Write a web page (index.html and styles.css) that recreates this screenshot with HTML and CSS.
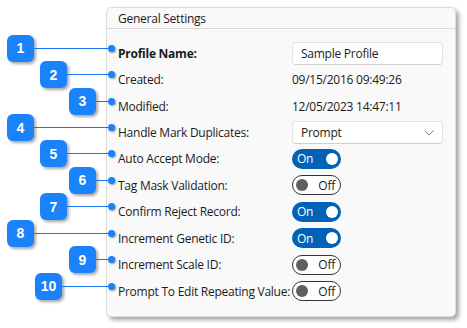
FILE: index.html
```html
<!DOCTYPE html>
<html lang="en">
<head>
    <meta charset="UTF-8">
    <title>General Settings</title>
    <link rel="stylesheet" href="styles.css">
</head>
<body>
    <div class="page">
        <div class="panel">
            <div class="panel-title">General Settings</div>
            <div class="settings">
                <div class="row">
                    <div class="label bold">Profile Name:
                        <span class="callout far"><span class="badge">1</span><span class="line"></span><span class="dot"></span></span>
                    </div>
                    <div class="value"><div class="textbox">Sample Profile</div></div>
                </div>
                <div class="row">
                    <div class="label">Created:
                        <span class="callout mid"><span class="badge">2</span><span class="line"></span><span class="dot"></span></span>
                    </div>
                    <div class="value"><span class="plain">09/15/2016 09:49:26</span></div>
                </div>
                <div class="row">
                    <div class="label">Modified:
                        <span class="callout near"><span class="badge">3</span><span class="line"></span><span class="dot"></span></span>
                    </div>
                    <div class="value"><span class="plain">12/05/2023 14:47:11</span></div>
                </div>
                <div class="row">
                    <div class="label">Handle Mark Duplicates:
                        <span class="callout far"><span class="badge">4</span><span class="line"></span><span class="dot"></span></span>
                    </div>
                    <div class="value">
                        <div class="textbox select">Prompt
                            <svg class="chevron" width="10" height="6" viewBox="0 0 10 6"><path d="M0.5 0.5 L5 5 L9.5 0.5" fill="none" stroke="#7a7a7a" stroke-width="1"/></svg>
                        </div>
                    </div>
                </div>
                <div class="row">
                    <div class="label">Auto Accept Mode:
                        <span class="callout mid"><span class="badge">5</span><span class="line"></span><span class="dot"></span></span>
                    </div>
                    <div class="value"><span class="toggle on"><span class="toggle-text">On</span><span class="knob"></span></span></div>
                </div>
                <div class="row">
                    <div class="label">Tag Mask Validation:
                        <span class="callout near"><span class="badge">6</span><span class="line"></span><span class="dot"></span></span>
                    </div>
                    <div class="value"><span class="toggle off"><span class="knob"></span><span class="toggle-text">Off</span></span></div>
                </div>
                <div class="row">
                    <div class="label">Confirm Reject Record:
                        <span class="callout mid"><span class="badge">7</span><span class="line"></span><span class="dot"></span></span>
                    </div>
                    <div class="value"><span class="toggle on"><span class="toggle-text">On</span><span class="knob"></span></span></div>
                </div>
                <div class="row">
                    <div class="label">Increment Genetic ID:
                        <span class="callout far"><span class="badge">8</span><span class="line"></span><span class="dot"></span></span>
                    </div>
                    <div class="value"><span class="toggle on"><span class="toggle-text">On</span><span class="knob"></span></span></div>
                </div>
                <div class="row">
                    <div class="label">Increment Scale ID:
                        <span class="callout near"><span class="badge">9</span><span class="line"></span><span class="dot"></span></span>
                    </div>
                    <div class="value"><span class="toggle off"><span class="knob"></span><span class="toggle-text">Off</span></span></div>
                </div>
                <div class="row">
                    <div class="label">Prompt To Edit Repeating Value:
                        <span class="callout wide"><span class="badge">10</span><span class="line"></span><span class="dot"></span></span>
                    </div>
                    <div class="value"><span class="toggle off"><span class="knob"></span><span class="toggle-text">Off</span></span></div>
                </div>
            </div>
        </div>
    </div>
</body>
</html>
```
FILE: styles.css
```css
* {
    margin: 0;
    padding: 0;
    box-sizing: border-box;
}

body {
    width: 467px;
    height: 328px;
    background: #ffffff;
    font-family: 'Open Sans', 'Noto Sans', 'Liberation Sans', sans-serif;
    font-size: 12px;
    letter-spacing: -0.25px;
    color: #1b1b1b;
    overflow: hidden;
}

.page {
    padding: 7px 0 0 106px;
}

/* settings panel */
.panel {
    width: 350px;
    height: 310px;
    background: #f9f9f9;
    border: 1px solid #dcdcdc;
    border-radius: 5px;
    box-shadow: 3px 3px 4px rgba(0, 0, 0, 0.35);
}

.panel-title {
    height: 21px;
    line-height: 21px;
    padding-left: 11px;
    border-bottom: 1px solid #d9d9d9;
}

.settings {
    padding: 11px 0 0 11px;
}

.row {
    display: grid;
    grid-template-columns: 174px 151px;
    height: 26.45px;
    align-items: center;
}

.label {
    position: relative;
    white-space: nowrap;
}

.bold {
    font-weight: 700;
}

.value {
    display: flex;
    align-items: center;
}

.textbox {
    width: 151px;
    height: 23px;
    background: #ffffff;
    border: 1px solid #e3e3e3;
    border-bottom-color: #cfcfcf;
    border-radius: 4px;
    padding-left: 8px;
    line-height: 21px;
}

.select {
    display: flex;
    align-items: center;
    justify-content: space-between;
    padding-right: 8px;
}

/* toggle switches */
.toggle {
    width: 49px;
    height: 20px;
    border-radius: 10px;
    display: flex;
    align-items: center;
    justify-content: space-between;
    padding: 0 3px 0 5px;
}

.toggle.on {
    background: #0063b8;
    color: #ffffff;
}

.toggle.off {
    background: #ffffff;
    border: 1px solid #333333;
    padding: 0 5px 0 3px;
}

.knob {
    width: 12px;
    height: 12px;
    border-radius: 50%;
    background: #ffffff;
}

.toggle.off .knob {
    background: #5f5f5f;
}

/* numbered callouts */
.callout {
    position: absolute;
    right: calc(100% + 3px);
    top: -10px;
    height: 27px;
    display: flex;
    align-items: center;
}

.far { left: -111px; }
.mid { left: -78px; }
.near { left: -49px; }
.wide { left: -83px; }

.badge {
    width: 27px;
    height: 27px;
    flex: none;
    background: #1a82fb;
    border-radius: 6px;
    color: #ffffff;
    font-family: 'Liberation Sans', Arial, sans-serif;
    font-weight: 700;
    font-size: 14px;
    letter-spacing: 0;
    display: flex;
    align-items: center;
    justify-content: center;
    box-shadow: 2px 2px 3px rgba(0, 0, 0, 0.35);
}

.line {
    flex: 1;
    height: 1px;
    background: #1a73e8;
}

.dot {
    width: 7px;
    height: 7px;
    flex: none;
    border-radius: 50%;
    background: #1a82fb;
    box-shadow: 1px 1px 2px rgba(0, 0, 0, 0.4);
}
```
